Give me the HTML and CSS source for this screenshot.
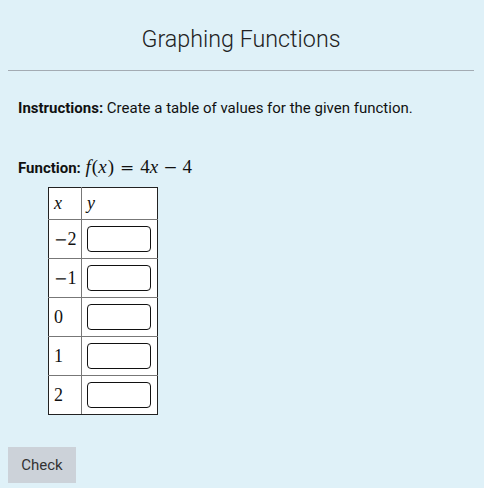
FILE: index.html
```html
<!DOCTYPE html>
<html>
<head>
<meta charset="utf-8">
<link rel="stylesheet" href="styles.css">
</head>
<body>
<div class="page">
  <h1 class="title">Graphing Functions</h1>
  <hr class="rule">
  <div class="content">
    <p class="instructions"><b>Instructions:</b> Create a table of values for the given function.</p>
    <p class="function"><b>Function:</b> <span class="math"><i>f</i><span class="pl">(</span><i>x</i><span class="pr">)</span><span class="op rel">=</span>4<i>x</i><span class="op bin">−</span>4</span></p>
    <table class="values">
      <tr class="head"><td class="xc"><i class="m">x</i></td><td class="yc"><i class="m">y</i></td></tr>
      <tr><td class="xc"><span class="m"><span class="neg">−</span>2</span></td><td class="yc"><input class="box" type="text"></td></tr>
      <tr><td class="xc"><span class="m"><span class="neg">−</span>1</span></td><td class="yc"><input class="box" type="text"></td></tr>
      <tr><td class="xc"><span class="m">0</span></td><td class="yc"><input class="box" type="text"></td></tr>
      <tr><td class="xc"><span class="m">1</span></td><td class="yc"><input class="box" type="text"></td></tr>
      <tr><td class="xc"><span class="m">2</span></td><td class="yc"><input class="box" type="text"></td></tr>
    </table>
  </div>
  <button class="check">Check</button>
</div>
</body>
</html>
```
FILE: styles.css
```css
html, body {
  margin: 0;
  padding: 0;
  background: #dff1f8;
}
body {
  font-family: Roboto, "Liberation Sans", sans-serif;
  color: #111;
}
.page {
  padding: 8px 10px 0 8px;
}
.title {
  margin: 0;
  padding-top: 17px;
  height: 45px;
  font-weight: 300;
  font-size: 23.3px;
  line-height: 28px;
  text-align: center;
  color: #222;
}
.rule {
  margin: 0;
  border: 0;
  border-top: 1px solid #a3abb3;
  height: 0;
}
.content {
  padding-left: 10px;
}
.instructions {
  margin: 28px 0 0 0;
  font-size: 15px;
  line-height: 18px;
}
.function {
  margin: 40px 0 0 0;
  font-size: 15px;
  line-height: 20px;
}
.math {
  font-family: "Liberation Serif", "DejaVu Serif", serif;
  font-size: 19px;
  margin-left: 1px;
}
.math .pl { margin-left: 1px; }
.math .pr { margin-left: 1px; }
.math .op {
  font-family: "DejaVu Serif", serif;
  font-size: 17px;
}
.math .rel { margin: 0 6px; }
.math .bin { margin: 0 5px; }
.values {
  margin: 9px 0 0 30px;
  border-collapse: collapse;
  border: 1px solid #222;
  background: #fff;
}
.values td {
  border: 1px solid #777;
  padding: 0 5px;
  height: 38px;
  vertical-align: middle;
}
.values .head td {
  height: 31px;
}
.values tr:first-child td { border-top-color: #222; }
.values tr:last-child td { border-bottom-color: #222; }
.values td.xc { border-left-color: #222; width: 23px; padding: 0 4px 0 5px; }
.values td.yc { border-right-color: #222; padding: 0 5px 0 5px; width: 65px; }
.m {
  font-family: "Liberation Serif", "DejaVu Serif", serif;
  font-size: 18px;
}
.neg {
  font-family: "DejaVu Serif", serif;
  font-size: 16px;
}
.box {
  display: block;
  box-sizing: border-box;
  width: 64px;
  height: 26px;
  border: 1px solid #111;
  border-radius: 4px;
  background: #fff;
  padding: 0;
  margin: 0;
}
.check {
  display: block;
  margin-top: 32px;
  width: 68px;
  height: 36px;
  border: 0;
  background: #ccd2d9;
  color: #333;
  font-family: Roboto, "Liberation Sans", sans-serif;
  font-size: 15px;
  padding: 0;
}
```
